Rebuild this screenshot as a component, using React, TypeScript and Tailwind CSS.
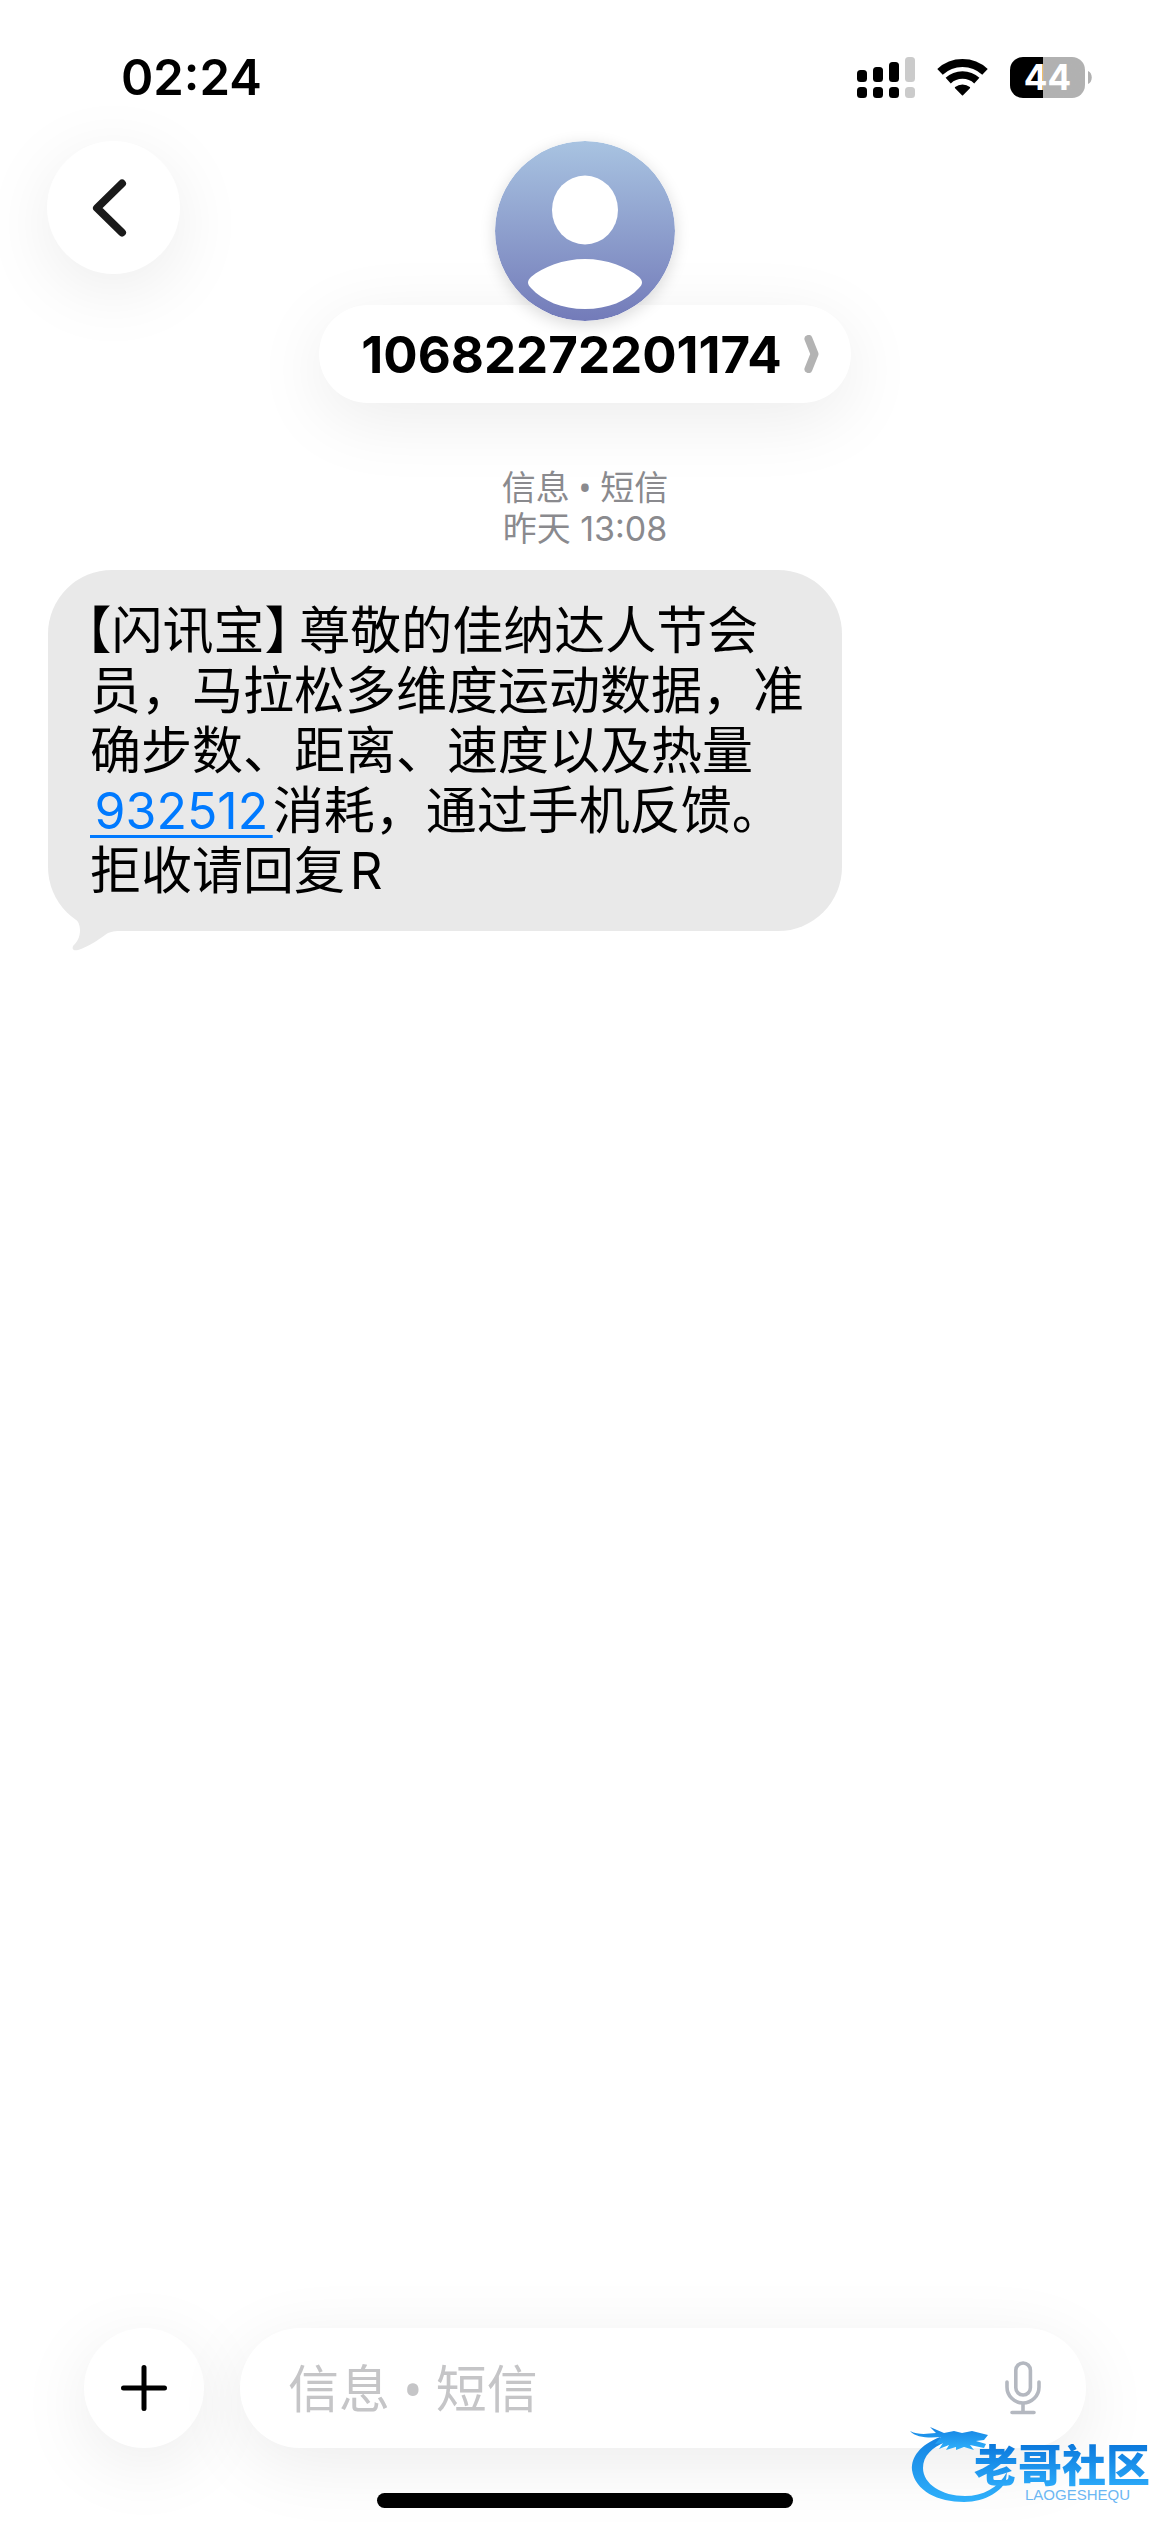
import type { ReactNode } from 'react';

const SOFT_SHADOW = 'shadow-[0_16px_72px_rgba(0,0,0,0.08)]';

const SignalIcon = () => (
  <svg width="58" height="41" viewBox="0 0 58 41" aria-hidden="true">
    <rect x="0" y="13" width="10" height="12" rx="3.5" />
    <rect x="16" y="10" width="10" height="15" rx="3.5" />
    <rect x="32" y="5" width="10" height="20" rx="3.5" />
    <rect x="48" y="0" width="10" height="25" rx="3.5" fill="#cbcbcb" />
    <rect x="0" y="30" width="10" height="11" rx="3.5" />
    <rect x="16" y="30" width="10" height="11" rx="3.5" />
    <rect x="32" y="30" width="10" height="11" rx="3.5" />
    <rect x="48" y="30" width="10" height="11" rx="3.5" fill="#cbcbcb" />
  </svg>
);

const WifiIcon = () => (
  <svg width="51" height="37" viewBox="0 0 51 37" fill="none" stroke="black" aria-hidden="true">
    <path d="M3 12.9A33 33 0 0 1 48 12.9" strokeWidth="8" />
    <path d="M11.2 21.6A21 21 0 0 1 39.8 21.6" strokeWidth="7.6" />
    <path d="M18.6 28.6A11 11 0 0 1 32.4 28.6L25.5 35.6Z" fill="black" strokeWidth="1.5" strokeLinejoin="round" />
  </svg>
);

const Battery = () => (
  <div className="flex items-center gap-[3px]">
    <div className="flex h-[41px] w-[75px] items-center justify-center rounded-[13px] bg-linear-to-r from-black from-44% to-[#b1b1b1] to-44% text-[35px] leading-none font-bold text-white">
      44
    </div>
    <svg width="4" height="13" viewBox="0 0 4 13" aria-hidden="true">
      <path d="M0 0C5 2 5 11 0 13Z" fill="#b1b1b1" />
    </svg>
  </div>
);

const StatusBar = () => (
  <div className="flex h-[141px] items-center justify-between pt-[14px] pr-[78px] pl-[121px]">
    <span className="text-[49px] leading-none font-semibold">02:24</span>
    <div className="flex items-center gap-[22px]">
      <SignalIcon />
      <WifiIcon />
      <Battery />
    </div>
  </div>
);

const Avatar = () => (
  <svg
    width="180"
    height="180"
    viewBox="0 0 180 180"
    className="relative z-10 rounded-full shadow-[0_4px_16px_rgba(0,0,0,0.15)]"
    aria-hidden="true"
  >
    <defs>
      <linearGradient id="avatar" x1="0" y1="0" x2="0" y2="1">
        <stop offset="0" stopColor="#a8c3e1" />
        <stop offset="1" stopColor="#737bb9" />
      </linearGradient>
    </defs>
    <circle cx="90" cy="90" r="90" fill="url(#avatar)" />
    <ellipse cx="90" cy="69" rx="33" ry="34.5" fill="white" />
    <path
      d="M90 118C112 118 132 126 144 136C148 140 148 143 144 147C132 160 113 168 90 168C67 168 48 160 36 147C32 143 32 140 36 136C48 126 68 118 90 118Z"
      fill="white"
    />
  </svg>
);

const Header = () => (
  <header className="grid grid-cols-[133px_1fr_133px] items-start px-[47px]">
    <button
      aria-label="返回"
      className={`flex size-[133px] items-center justify-center rounded-full bg-white ${SOFT_SHADOW}`}
    >
      <svg width="46" height="58" viewBox="0 0 46 58" fill="none" aria-hidden="true">
        <path d="M31 4.5L6 29L31 53.5" stroke="#1a1a1a" strokeWidth="8" strokeLinecap="round" strokeLinejoin="round" />
      </svg>
    </button>
    <div className="flex flex-col items-center">
      <Avatar />
      <button
        className={`-mt-4 flex h-[98px] items-center gap-[22px] rounded-full bg-white pr-8 pl-[42px] text-[51px] leading-none font-bold ${SOFT_SHADOW}`}
      >
        10682272201174
        <svg width="15" height="38" viewBox="0 0 15 38" fill="none" aria-hidden="true">
          <path d="M4.5 4L10.5 19L4.5 34" stroke="#b3b3b3" strokeWidth="8" strokeLinecap="round" strokeLinejoin="round" />
        </svg>
      </button>
    </div>
  </header>
);

const Half = ({ children }: { children: ReactNode }) => (
  <span className="[font-feature-settings:'halt']">{children}</span>
);

const Message = () => (
  <div className="relative mt-5 ml-12 w-[794px] max-w-full rounded-[64px] bg-[#e9e9e9] pt-[31px] pr-8 pb-[30px] pl-[42px] text-[51px] leading-[60px]">
    <p className="-indent-1">
      <Half>【</Half>闪讯宝<Half>】</Half>&#8201;尊敬的佳纳达人节会
    </p>
    <p>员，马拉松多维度运动数据，准</p>
    <p>确步数、距离、速度以及热量</p>
    <p>
      <a
        href="#"
        className="text-[50px] text-[#007aff] underline decoration-3 underline-offset-6"
      >
        &#8202;932512&#8202;
      </a>
      消耗，通过手机反馈。
    </p>
    <p>拒收请回复&#8202;R</p>
    <svg className="absolute -bottom-5 left-0" width="72" height="50" viewBox="0 0 72 50" aria-hidden="true">
      <path
        d="M14 4C24 15 32 18 32 29C32 37 29 41 25 45C24 48 25 50 30 49C40 46 50 39 57 34C61 31 65 30 72 30V4Z"
        fill="#e9e9e9"
      />
    </svg>
  </div>
);

const MicIcon = () => (
  <svg width="36" height="54" viewBox="0 0 36 54" fill="none" stroke="#b4b8c0" strokeWidth="3.6" strokeLinecap="round" aria-hidden="true">
    <rect x="10.8" y="2" width="14.6" height="32" rx="7.3" />
    <path d="M2 21V26A16 16 0 0 0 34 26V21" />
    <path d="M18 43V51M7 51.5H29" />
  </svg>
);

const Composer = () => (
  <footer className="mt-auto">
    <div className="flex items-center gap-9 px-[84px]">
      <button
        aria-label="添加"
        className={`flex size-[120px] shrink-0 items-center justify-center rounded-full bg-white ${SOFT_SHADOW}`}
      >
        <svg width="46" height="46" viewBox="0 0 46 46" stroke="black" strokeWidth="5" strokeLinecap="round" aria-hidden="true">
          <path d="M23 2.5V43.5M2.5 23H43.5" />
        </svg>
      </button>
      <div className={`flex h-[120px] min-w-0 flex-1 items-center rounded-full bg-white pr-[45px] pl-12 ${SOFT_SHADOW}`}>
        <input
          type="text"
          aria-label="信息"
          placeholder="信息 • 短信"
          className="min-w-0 flex-1 bg-transparent font-['Noto_Sans','Noto_Sans_CJK_SC',sans-serif] text-[51px] outline-none placeholder:text-[#c5c5c7]"
        />
        <button aria-label="语音输入">
          <MicIcon />
        </button>
      </div>
    </div>
    <div className="mx-auto mt-[45px] mb-6 h-[15px] w-[416px] rounded-full bg-black" />
  </footer>
);

const Watermark = () => (
  <div className="absolute right-5 bottom-[30px] h-20 w-[240px]">
    <svg width="100" height="80" viewBox="0 0 100 80" className="absolute top-0 left-0" aria-hidden="true">
      <defs>
        <linearGradient id="dragon" x1="0" y1="0" x2="0" y2="1">
          <stop offset="0" stopColor="#1583e2" />
          <stop offset="1" stopColor="#2fb0fb" />
        </linearGradient>
      </defs>
      <g fill="url(#dragon)">
        <path d="M30 15C10 23 1 35 2 48C5 69 28 80 54 80C76 80 93 68 96 58L97 50C88 66 73 74 55 74C32 74 13 62 13 46C13 34 22 25 36 20Z" />
        <path d="M0 9C8 13 16 12 26 11L20 5L34 11L44 9L52 11L62 9L78 13L74 18L66 19L76 22L74 26L60 23L64 28L54 25L46 28L46 25L36 28L39 23L29 27L33 21L25 22L31 15C20 16 6 16 0 9Z" />
      </g>
    </svg>
    <div className="absolute top-[22px] right-0 flex flex-col items-end">
      <span className="bg-linear-to-b from-[#0b78dc] to-[#2cabfa] bg-clip-text text-[44px] leading-[44px] font-black text-transparent">
        老哥社区
      </span>
      <span className="pr-5 font-['Liberation_Sans',sans-serif] text-[15px] leading-[14px] text-[#6cb7f3]">
        LAOGESHEQU
      </span>
    </div>
  </div>
);

export default function App() {
  return (
    <div className="relative flex min-h-screen flex-col overflow-hidden bg-white font-['Inter','Noto_Sans_CJK_SC',sans-serif] text-black">
      <StatusBar />
      <Header />
      <main>
        <div className="mt-[63px] text-center text-[34px] leading-[42px] text-[#8a8a8e]">
          <p className="font-['Noto_Sans','Noto_Sans_CJK_SC',sans-serif]">信息 • 短信</p>
          <p>昨天 13:08</p>
        </div>
        <Message />
      </main>
      <Composer />
      <Watermark />
    </div>
  );
}
